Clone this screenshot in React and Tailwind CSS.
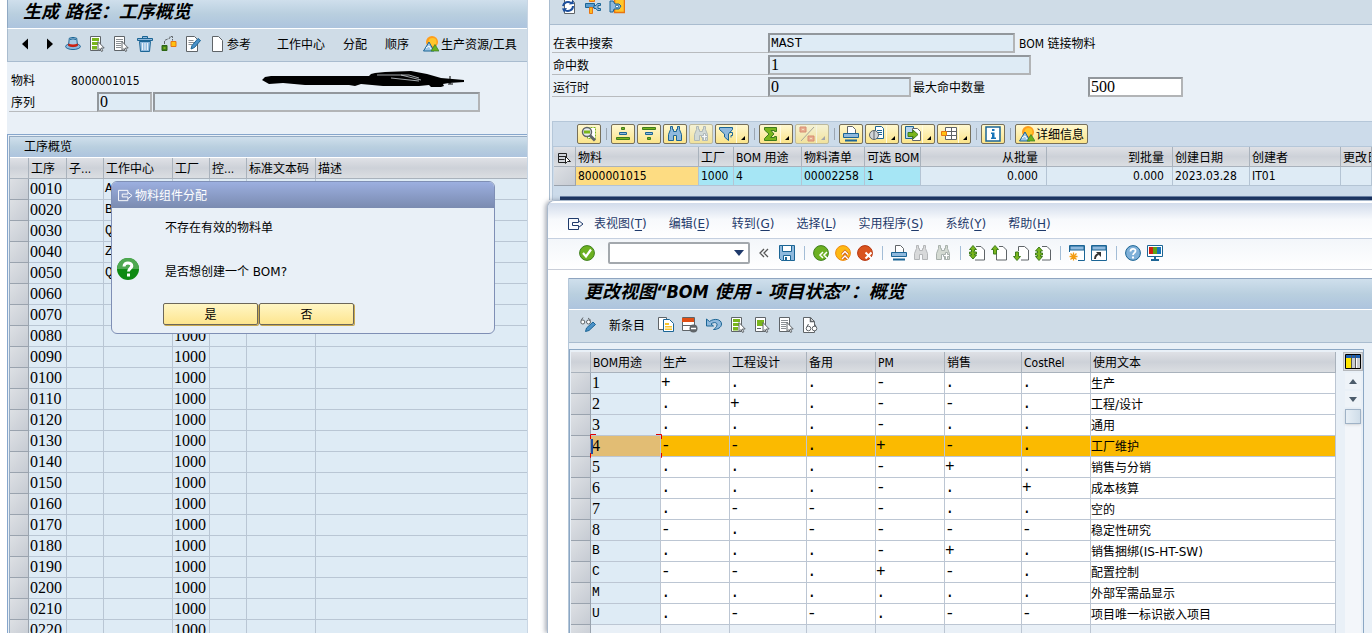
import React from 'react';

const OPERATIONS = [
  { no: '0010', center: 'A' },
  { no: '0020', center: 'B' },
  { no: '0030', center: 'Q' },
  { no: '0040', center: 'Z' },
  { no: '0050', center: 'Q' },
  { no: '0060' },
  { no: '0070' },
  { no: '0080', plant: '1000' },
  { no: '0090', plant: '1000' },
  { no: '0100', plant: '1000' },
  { no: '0110', plant: '1000' },
  { no: '0120', plant: '1000' },
  { no: '0130', plant: '1000' },
  { no: '0140', plant: '1000' },
  { no: '0150', plant: '1000' },
  { no: '0160', plant: '1000' },
  { no: '0170', plant: '1000' },
  { no: '0180', plant: '1000' },
  { no: '0190', plant: '1000' },
  { no: '0200', plant: '1000' },
  { no: '0210', plant: '1000' },
  { no: '0220', plant: '1000' },
];

// one character per column: 生产, 工程设计, 备用, PM, 销售, CostRel
const USAGES = [
  { id: '1', flags: '+..-..', text: '生产' },
  { id: '2', flags: '.+.--.', text: '工程/设计' },
  { id: '3', flags: '...-..', text: '通用' },
  { id: '4', flags: '--.+-.', text: '工厂维护', selected: true },
  { id: '5', flags: '...-+.', text: '销售与分销' },
  { id: '6', flags: '...-.+', text: '成本核算' },
  { id: '7', flags: '.---..', text: '空的' },
  { id: '8', flags: '-.----', text: '稳定性研究' },
  { id: 'B', flags: '...-+.', text: '销售捆绑(IS-HT-SW)' },
  { id: 'C', flags: '--.+-.', text: '配置控制' },
  { id: 'M', flags: '......', text: '外部军需品显示' },
  { id: 'U', flags: '.--.--', text: '项目唯一标识嵌入项目' },
];

const MENU = [
  ['表视图', 'T'],
  ['编辑', 'E'],
  ['转到', 'G'],
  ['选择', 'L'],
  ['实用程序', 'S'],
  ['系统', 'Y'],
  ['帮助', 'H'],
];

const BLUE = '#1b6595';
const SKY = '#8fb9dd';
const GREEN = '#7ab51d';
const DGREEN = '#3e7d1c';
const GRAY = '#5f6468';

function Svg({ children, className = 'h-4 w-4' }) {
  return (
    <svg viewBox="0 0 16 16" className={`${className} block shrink-0`} fill="none" aria-hidden="true">
      {children}
    </svg>
  );
}

const pointer = <path d="M9 5.5v9l2-2 1.5 3 1.3-.7-1.4-2.8h2.8z" fill="#fff" stroke={GRAY} />;
const sheet = <path d="M3.5.5h6l4 4v11h-10z" fill="#fff" stroke={GRAY} />;

const icons = {
  left: <path d="M11 2.500v11L5 8z" fill="#000" />,
  right: <path d="M6 2.500v11L12 8z" fill="#000" />,
  hat: (
    <>
      <ellipse cx="8" cy="10.5" rx="7.4" ry="3" fill={SKY} stroke={BLUE} />
      <path d="M3.500 9.500 4.300 2.200Q8 .6 11.700 2.200L12.500 9.500Q8 12 3.500 9.500z" fill="#a9cbe6" stroke={BLUE} />
      <path d="M3.300 7.500Q8 9.500 12.700 7.500v2.500Q8 12 3.300 10z" fill="#d0200f" />
      <path d="M5 3.500Q8 2.300 11 3.500" stroke={BLUE} />
    </>
  ),
  selectAll: (
    <>
      <path d="M1.500.5h10v14h-10z" fill="#fff" stroke={GRAY} />
      <path d="M3 2h7v3H3zM3 6h7v3H3zM3 10h5v3.500H3z" fill={GREEN} />
      {pointer}
    </>
  ),
  selectBlock: (
    <>
      <path d="M1.500.5h10v14h-10z" fill="#fff" stroke={GRAY} />
      <path d="M3 3h7v6H3z" fill={GREEN} />
      <path d="M3 11.500h4" stroke={GRAY} />
      {pointer}
    </>
  ),
  deselect: (
    <>
      <path d="M1.500.5h10v14h-10z" fill="#fff" stroke={GRAY} />
      <path d="M3 3.500h7M3 5.500h7M3 7.500h5M3 9.500h5M3 11.500h5" stroke="#8b9094" />
      {pointer}
    </>
  ),
  trash: (
    <>
      <path d="M5.500 2.500v-2h5v2M.5 2.500h15v2H.5z" fill={SKY} stroke={BLUE} />
      <path d="M2.500 5.500h11l-1 10h-9z" fill={SKY} stroke={BLUE} />
      <path d="M5.500 7v7M8 7v7M10.500 7v7" stroke="#e7f1f9" strokeWidth="1.200" />
    </>
  ),
  assign: (
    <>
      <path d="M3.500 8V4.500L9 2V.5h2.500v4" stroke={GRAY} strokeDasharray="3 1" />
      <path d="M1 9.500h5v5H1z" fill={DGREEN} stroke="#2c6513" />
      <path d="M2.500 11h2v2h-2z" fill={GREEN} />
      <path d="M10 5.500h5v5h-5z" fill="#ffc20e" stroke="#e87511" />
    </>
  ),
  edit: (
    <>
      <path d="M1.500.5h8l3 3v12h-11z" fill="#fff" stroke={GRAY} />
      <path d="M3.500 4.500h5M3.500 6.500h6M3.500 8.500h4" stroke="#8b9094" />
      <path d="m6 13 1-3.500 6-7 2.500 2-6 7z" fill="#4a91c8" stroke={BLUE} />
    </>
  ),
  page: sheet,
  mountain: (
    <>
      <circle cx="9" cy="6" r="6" fill="#ff9d1b" />
      <circle cx="9.500" cy="6" r="4" fill="#ffc62b" />
      <path d="M.5 15 6 6l5 9z" fill="#9cc5e5" stroke={BLUE} />
      <path d="m3 12 3-2 2 3" stroke="#fff" />
      <path d="m8 15 4-6.500 4 6.500z" fill="#6eb21b" stroke="#2f7a2a" strokeWidth=".7" />
    </>
  ),
  exit: <path d="M10.500 4.500v-2h-10v11h10v-2M4.500 6.500h6v-2L15 8l-4.500 3.500v-2h-6z" stroke="currentColor" />,
  refresh: (
    <>
      {sheet}
      <path d="M2 8a5 5 0 0 1 8-3M12 8a5 5 0 0 1-8 4" stroke="#1c4f9c" strokeWidth="2" />
      <path d="m8 6.500 5-.5-1-4zM6 10l-5 .5 2 4z" fill="#1c4f9c" />
    </>
  ),
  wrench: (
    <>
      <path d="M4.500.5h5v3h-5z" fill="#ffb81c" stroke="#e87511" />
      <path d="M.5 5.500h9v4h-9z" fill="#5a9dcf" stroke={BLUE} />
      <path d="M15.500 5.500h-3l-1.500 2h-2v3h2l1.500 2h3v-2H13V7.500h2.500z" fill={SKY} stroke={BLUE} />
      <path d="M4.500 9.500h3v6h-3z" fill="#ffb81c" stroke="#e87511" />
    </>
  ),
  wrenchPlan: (
    <>
      <path d="M5.500.5h10v14h-10z" fill="#ffc62b" stroke="#e87511" strokeWidth="1.500" />
      <path d="M1 14V3h3l2 3h4l2 2-2 3H5l-1 3z" fill="#8fb9dd" stroke={BLUE} />
      <circle cx="8" cy="8.500" r="1.500" fill="#fff" stroke={BLUE} />
    </>
  ),
  details: (
    <>
      <path d="M6.500 1.500h8v11h-8z" fill="#fff" stroke={GREEN} strokeDasharray="2 1" />
      <circle cx="6" cy="6" r="4.500" fill="#e8eef2" stroke={GRAY} strokeWidth="1.500" />
      <path d="M3 4.500h6v3H3z" fill={GREEN} />
      <path d="m9 9.500 5 5" stroke={GRAY} strokeWidth="3" />
    </>
  ),
  sortUp: (
    <>
      <path d="M6.500 1.500h3v2h-3z" fill={GREEN} stroke={DGREEN} />
      <path d="M4.500 6.500h7v2h-7z" fill={SKY} stroke={BLUE} />
      <path d="M1.500 11.500h13v2h-13z" fill={GREEN} stroke={DGREEN} />
    </>
  ),
  sortDown: (
    <>
      <path d="M1.500 1.500h13v2h-13z" fill={GREEN} stroke={DGREEN} />
      <path d="M4.500 6.500h7v2h-7z" fill={SKY} stroke={BLUE} />
      <path d="M6.500 11.500h3v2h-3z" fill={GREEN} stroke={DGREEN} />
    </>
  ),
  find: <path d="M3.500.5h2v3h1v2h3v-2h1v-3h2v3l2 5v6h-5v-5h-3v5h-5v-6l2-5z" fill={SKY} stroke={BLUE} />,
  findOff: <path d="M3.500.5h2v3h1v2h3v-2h1v-3h2v3l2 5v6h-5v-5h-3v5h-5v-6l2-5z" fill="#d8d9da" stroke="#b4b6b8" />,
  findNext: (
    <>
      <path d="M3.500.5h2v3h1v2h3v-2h1v-3h2v3l2 5v6h-5v-5h-3v5h-5v-6l2-5z" fill="#d4dad2" stroke="#a8b1ac" />
      <path d="M10.500 7.500h2v2h2v2h-2v3h-2v-3h-2v-2h2z" fill="#fff" stroke="#a8b1ac" />
    </>
  ),
  filter: (
    <>
      <path d="M.5 1.500h13v2L9.500 8v6.500L5.500 11V8l-5-4.500z" fill={SKY} stroke={BLUE} />
      <path d="M10.500 6.500h3v3h-1.500v2" stroke={BLUE} />
    </>
  ),
  sum: <path d="M1.500 1.500h12v4h-2v-1H8L11 8l-3.500 3.500h4v-1h2v4h-12v-2L6 8l-4.500-4z" fill={GREEN} stroke={DGREEN} />,
  subtotal: (
    <>
      <path d="M1 1h6v5H1zM9 10h6v5H9z" fill="#f0a27c" stroke="#d97b55" />
      <path d="M3 3.500h2M11 12.500h2" stroke="#fbe2b0" />
      <path d="M2 15 15 1" stroke="#9c9a88" />
    </>
  ),
  print: (
    <>
      <path d="M4.500 7V.5h5l3 3V7" fill="#fff" stroke={GRAY} />
      <path d="M.5 7.500h15v4H.5z" fill={SKY} stroke={BLUE} />
      <path d="M2 14.500h12" stroke={BLUE} strokeWidth="2" />
    </>
  ),
  view: (
    <>
      <path d="M6.500.5h6l2 2v10h-8z" fill="#fff" stroke={BLUE} />
      <path d="M8 4.500h5M8 6.500h5M8 8.500h5" stroke={BLUE} />
      <circle cx="5" cy="9" r="4.500" fill="#cfd4d8" stroke={GRAY} />
      <path d="M5 4.500v9" stroke={GRAY} />
    </>
  ),
  exportData: (
    <>
      <path d="M.5.5h8v12h-8z" fill="#b9d5ec" stroke={BLUE} />
      <path d="M7.500 2.500h5l3 3v9h-8z" fill="#fff" stroke={GRAY} />
      <path d="M3 6.500h5V4l5 4.500-5 4.500v-2.500H3z" fill={GREEN} stroke={DGREEN} />
    </>
  ),
  layout: (
    <>
      <path d="M4.500 1.500h11v12h-11zM4.500 5.500h11M4.500 9.500h11M10.500 1.500v12" fill="#fff" stroke={GRAY} />
      <path d="M.5 5.500h5v4h-5z" fill="#ffc20e" stroke="#e87511" />
    </>
  ),
  info: (
    <>
      <path d="M1 1h14v14H1z" fill="#fff" stroke={BLUE} strokeWidth="1.500" />
      <path d="M7 3h2.500v2H7zM6 6.500h3.500v5H11v1.500H6v-1.500h1V8H6z" fill="#1673b8" />
    </>
  ),
  check: (
    <>
      <circle cx="8" cy="8" r="7.400" fill="#6cb021" stroke="#3f7f1e" />
      <path d="m4 8 3 3.500L12 4.500" stroke="#fff" strokeWidth="2.200" />
    </>
  ),
  save: (
    <>
      <path d="M.5.5h15v15h-13l-2-2z" fill={SKY} stroke={BLUE} />
      <path d="M3.500.5h9v6h-9zM4.500 10.500h7v5h-7z" fill="#fff" stroke={BLUE} />
      <path d="M6 12h2v3H6z" fill={BLUE} />
    </>
  ),
  back: (
    <>
      <circle cx="8" cy="8" r="7.400" fill="#6cb021" stroke="#3f7f1e" />
      <path d="M10 7 7 10l3 3M14 7l-3 3 3 3" stroke="#fff" strokeWidth="1.500" />
    </>
  ),
  up: (
    <>
      <circle cx="8" cy="8" r="7.400" fill="#fdb913" stroke="#ee8a12" />
      <path d="m7 9.500 3-3 3 3M7 14l3-3 3 3" stroke="#d3631a" strokeWidth="3" />
      <path d="m7 9.500 3-3 3 3M7 14l3-3 3 3" stroke="#fff" strokeWidth="1.300" />
    </>
  ),
  cancel: (
    <>
      <circle cx="8" cy="8" r="7.400" fill="#d9541e" stroke="#b5350f" />
      <path d="m8.500 7.500 6 6M14.500 7.500l-6 6" stroke="#fff" strokeWidth="2" />
    </>
  ),
  firstPage: (
    <>
      <path d="M7 1.500h5l3.500 3.500v10H6" fill="#fff" stroke={GRAY} />
      <path d="m4 .5 3.500 4H5.500v1.500l-1 1H7.500v2H5.500v1h2L4 14 .5 10h2V9h-2V7h2V4.500h-2z" fill={GREEN} stroke={DGREEN} />
    </>
  ),
  prevPage: (
    <>
      <path d="M8 1.500h4l3.500 3.500v10H5.500V9" fill="#fff" stroke={GRAY} />
      <path d="m4 .5 3.500 4H5.500V9h-3V4.500h-2z" fill={GREEN} stroke={DGREEN} />
    </>
  ),
  nextPage: (
    <>
      <path d="M5.500 6V1.500h6L15.500 5v10H8" fill="#fff" stroke={GRAY} />
      <path d="m4 15.500 3.500-4H5.500V7h-3v4.500h-2z" fill={GREEN} stroke={DGREEN} />
    </>
  ),
  lastPage: (
    <>
      <path d="M7 1.500h5l3.500 3.500v10H7" fill="#fff" stroke={GRAY} />
      <path d="m4 15.500 3.500-4H5.500V10h2V8h-2V6h2L4 2 .5 6h2v2h-2v2h2v1.500h-2z" fill={GREEN} stroke={DGREEN} />
    </>
  ),
  newSession: (
    <>
      <path d="M.5.5h15v15H.5z" fill="#fff" stroke={BLUE} />
      <path d="M1 1h14v4H1z" fill={SKY} stroke={BLUE} />
      <path d="M0 7h9v9H0z" fill="#fff" />
      <path d="M4.500 7.500v8M.5 11.500h8M1.500 8.500l6 6M7.500 8.500l-6 6" stroke="#f39c12" strokeWidth="1.300" />
    </>
  ),
  shortcut: (
    <>
      <path d="M.5.5h15v15H.5z" fill="#fff" stroke={BLUE} />
      <path d="M1 1h14v4H1z" fill={SKY} stroke={BLUE} />
      <path d="M4 14q0-4 3.500-5" stroke="#333" strokeWidth="2" />
      <path d="M5 7h5v5z" fill="#333" />
    </>
  ),
  help: (
    <>
      <circle cx="8" cy="8" r="7.400" fill="#7fb0d8" stroke={BLUE} />
      <path d="M5.500 6.500C5.500 3 10.800 3.200 10.500 6c0 1.700-2.500 2-2.500 4" stroke="#fff" strokeWidth="1.800" />
      <path d="M7 11.500h2v2H7z" fill="#fff" />
    </>
  ),
  monitor: (
    <>
      <path d="M.5.5h15v11H.5z" fill="#fff" stroke={BLUE} />
      <path d="M2 2h4v7H2z" fill="#d0200f" />
      <path d="M6 2h4v7H6z" fill="#5fa315" />
      <path d="M10 2h4v7h-4z" fill="#1673b8" />
      <path d="M8 11.500v3M4 15h8" stroke={BLUE} strokeWidth="2" />
    </>
  ),
  glassesEdit: (
    <>
      <path d="M1 3.500 3 .5M8 1l3 2.500" stroke={GRAY} />
      <circle cx="2.800" cy="5" r="2" fill="#fff" stroke={GRAY} />
      <circle cx="8.500" cy="5" r="2" fill="#fff" stroke={GRAY} />
      <path d="m5.500 14.500 1-3.500 6.500-6 2.500 2.500-6.500 6z" fill="#4a91c8" stroke={BLUE} />
    </>
  ),
  copy: (
    <>
      <path d="M.5.5h8v12h-8z" fill="#fff" stroke={GRAY} />
      <path d="M5.500 2.500h6l4 4v8h-10z" fill="#fff" stroke={BLUE} />
      <path d="M7 6h4v2H7zM7 9h7v1.500H7zM7 11.500h7V13H7z" fill="#f8c52c" />
    </>
  ),
  deleteRow: (
    <>
      <path d="M.5.500h12v13H.5z" fill="#fff" stroke={GRAY} />
      <path d="M0 1h12v4H0z" fill="#e04e14" />
      <path d="M1 8.500h10" stroke={GRAY} />
      <circle cx="11.500" cy="11.500" r="4" fill={GRAY} />
      <path d="M9 11.500h5" stroke="#fff" strokeWidth="1.500" />
    </>
  ),
  undo: (
    <path d="M.5 2v7h7L5 7c3-2.500 6.500-1.500 6 1-.3 2-2 3.500-3.500 4.500 4 0 8-2 8-5.500C15.500 2 8 1 3.500 4.500z" fill={SKY} stroke={BLUE} />
  ),
  display: (
    <>
      <path d="M1.500.5h7l4 4v11h-11z" fill="#fff" stroke={GRAY} />
      <path d="M8.500.5v4h4" stroke={GRAY} strokeWidth="1.500" />
      <circle cx="6.500" cy="11.500" r="2.300" fill="#fff" stroke={GRAY} />
      <circle cx="12.500" cy="11.500" r="2.300" fill="#fff" stroke={GRAY} />
      <path d="M5 9.500 6.500 7M14 9.500 12.500 7" stroke={GRAY} />
    </>
  ),
  selectCols: (
    <>
      <path d="M2.500 3.500h8v9h-8zM2.500 6.500h8M2.500 9.500h6" stroke="#222" />
      <path d="M9.500 6.500v7l2-2h3z" fill="#fff" stroke="#222" />
    </>
  ),
};

function Icon({ name, className }) {
  return <Svg className={className}>{icons[name]}</Svg>;
}

function IconButton({ name, label, children }) {
  return (
    <button type="button" aria-label={label} className="flex shrink-0 items-center gap-[2px] whitespace-nowrap">
      <Icon name={name} />
      {children && <span className="pt-[2px]">{children}</span>}
    </button>
  );
}

function AlvButton({ name, label, split, disabled, children }) {
  return (
    <button
      type="button"
      aria-label={label}
      disabled={disabled}
      className={`flex h-5 min-w-6 shrink-0 items-center justify-center gap-px rounded-[2px] border bg-linear-to-b from-[#fff8cf] to-[#fbe489] px-[3px] whitespace-nowrap ${
        disabled ? 'border-[#b9b18a] opacity-80' : 'border-[#77705a]'
      }`}
    >
      <Icon name={name} />
      {children && <span className="pt-[2px]">{children}</span>}
      {split && (
        <span className="flex h-full w-[9px] items-end justify-end border-l border-[#fffbe0] pb-[3px]">
          <svg viewBox="0 0 4 4" className="h-1 w-1" aria-hidden="true">
            <path d="M4 0v4H0z" fill={disabled ? '#999' : '#000'} />
          </svg>
        </span>
      )}
    </button>
  );
}

function AlvSep() {
  return (
    <span className="flex w-[6px] shrink-0 items-center justify-center">
      <span className="h-3 w-px bg-[#9aa5b1]" />
    </span>
  );
}

function Sep() {
  return (
    <span className="flex w-[6px] shrink-0 justify-center">
      <span className="h-[14px] w-px bg-[#a3bdd6]" />
    </span>
  );
}

const FIELD =
  'block h-5 min-w-0 border-2 border-t-[#92979c] border-l-[#92979c] border-r-[#b2b4b6] border-b-[#b2b4b6] px-px leading-4 outline-none';
const NUM = "font-['Liberation_Serif','Noto_Sans_CJK_SC',serif] text-base";
const MONO = "font-['Liberation_Mono','Noto_Sans_CJK_SC',monospace] text-[13px]";
const WIDE = "font-['DejaVu_Sans','Noto_Sans_CJK_SC',sans-serif]";
const TITLE = 'text-lg leading-6 font-bold italic whitespace-nowrap';
const TITLE_BG = 'bg-linear-to-b from-[#cfdfec] via-[#b9cfdf] to-[#adc4de]';
const HEAD_BG = 'bg-linear-to-b from-[#dfe1e6] via-[#cdd1d8] to-[#dbdee2]';
const SEL = 'border-r border-b border-[#9aa3ae] bg-linear-to-br from-[#dde0e4] to-[#c6cbd3] p-0';

function RoutingWindow() {
  const th = `h-[21px] border-r border-b border-[#a9b2bc] ${HEAD_BG} truncate px-[2px] pt-[2px] text-left font-normal last:border-r-0`;
  const td = 'h-[21px] overflow-hidden border-r border-b border-[#b9c6d4] bg-[#deebf5] p-0 pl-px leading-5 last:border-r-0';
  return (
    <section className="relative flex min-h-0 min-w-0 flex-col overflow-hidden border-r border-[#c9d6e4] bg-[#e9f0f7]">
      <header className={`flex h-[29px] shrink-0 items-start border-b border-l border-b-white border-l-[#8fa9c4] pl-[15px] ${TITLE_BG}`}>
        <h1 className={TITLE}>生成 路径：工序概览</h1>
      </header>
      <div className="flex h-[33px] shrink-0 items-center gap-2 border-b border-l border-b-[#a9bccf] border-l-[#a9bccf] bg-[#cfdce7] pb-[3px] pl-[9px]">
        <IconButton name="left" label="上一个" />
        <IconButton name="right" label="下一个" />
        <IconButton name="hat" label="抬头" />
        <IconButton name="selectAll" label="全选" />
        <IconButton name="deselect" label="取消全选" />
        <IconButton name="trash" label="删除" />
        <IconButton name="assign" label="组件分配" />
        <IconButton name="edit" label="长文本" />
        <IconButton name="page">参考</IconButton>
        <div className="mr-[6px] ml-[18px] flex gap-[18px] pt-[2px] whitespace-nowrap">
          <button type="button">工作中心</button>
          <button type="button">分配</button>
          <button type="button">顺序</button>
        </div>
        <IconButton name="mountain">生产资源/工具</IconButton>
      </div>

      <div className="flex shrink-0 flex-col gap-[2px] pt-2 pb-[22px] pl-[2px]">
        <div className="flex h-5 items-center pl-[2px]">
          <span className="w-[60px] shrink-0 pt-[2px]">物料</span>
          <span className="w-[190px] shrink-0 pt-[2px]">8000001015</span>
          <svg viewBox="0 0 205 18" className="h-[18px] w-[205px] shrink-0" fill="none" aria-hidden="true">
            <path
              d="M1 9 4 6 10 5h20L108 5 110 3 114 2 124 1 150 0 166 3 180 7 203 9 203 11 188 12 182 13 183 15 180 16 170 16 168 14 158 15 122 15 100 13 94 15 88 14 44 14 22 12 8 13z"
              fill="#000"
            />
            <path d="M116 4h32l10 3M130 7l28 3M140 4l20 5" stroke="#e9f0f7" strokeWidth=".7" />
            <path d="M189 5v8M187 13h5" stroke="#000" />
          </svg>
        </div>
        <div className="flex h-5 pr-[47px]">
          <label htmlFor="seq" className="w-[88px] shrink-0 border-b border-[#b8bbbe] pl-[2px] leading-[22px]">
            序列
          </label>
          <input id="seq" readOnly defaultValue="0" className={`${FIELD} ${NUM} mr-px w-[55px] bg-[#deebf5]`} />
          <input aria-label="序列描述" readOnly className={`${FIELD} flex-1 bg-[#deebf5]`} />
        </div>
      </div>

      <div className="min-h-0 flex-1 border-t border-l border-[#86a6cc] pt-px pl-px">
        <div className="border-t border-l border-[#94abc3]">
          <h2 className={`h-[21px] border-b border-white pl-[14px] leading-5 ${TITLE_BG}`}>工序概览</h2>
          <table className="w-full table-fixed border-separate border-spacing-0">
            <colgroup>
              <col className="w-[19px]" />
              <col className="w-[38px]" />
              <col className="w-[37px]" />
              <col className="w-[69px]" />
              <col className="w-[37px]" />
              <col className="w-[37px]" />
              <col className="w-[69px]" />
              <col />
            </colgroup>
            <thead>
              <tr>
                <th className={th} />
                <th className={th}>工序</th>
                <th className={th}>子...</th>
                <th className={th}>工作中心</th>
                <th className={th}>工厂</th>
                <th className={th}>控...</th>
                <th className={th}>标准文本码</th>
                <th className={th}>描述</th>
              </tr>
            </thead>
            <tbody>
              {OPERATIONS.map((op) => (
                <tr key={op.no}>
                  <td className={SEL} />
                  <td className={`${td} ${NUM}`}>{op.no}</td>
                  <td className={td} />
                  <td className={`${td} ${MONO}`}>{op.center}</td>
                  <td className={`${td} ${NUM}`}>{op.plant}</td>
                  <td className={td} />
                  <td className={td} />
                  <td className={td} />
                </tr>
              ))}
            </tbody>
          </table>
        </div>
      </div>

      <ComponentDialog />
    </section>
  );
}

function ComponentDialog() {
  const button =
    'h-[22px] w-[95px] rounded-[2px] border border-[#6c675a] bg-linear-to-b from-[#fff6c4] to-[#fde58e] pt-[2px] shadow-[1px_1px_0_#c9a94f]';
  return (
    <div
      role="dialog"
      aria-labelledby="dlg-title"
      className="absolute top-[181px] left-[104px] w-[384px] overflow-hidden rounded-md border border-[#7f8fb5] bg-[#e9f0f7]"
    >
      <div className="flex h-[26px] items-center gap-[2px] bg-linear-to-b from-[#9cafe0] to-[#7a8bb0] pl-[6px] text-white">
        <Icon name="exit" className="h-[15px] w-[15px]" />
        <h2 id="dlg-title" className="pt-[2px]">
          物料组件分配
        </h2>
      </div>
      <div className="flex h-[95px] items-start">
        <svg viewBox="0 0 22 22" className="mt-[50px] ml-[5px] h-[22px] w-[22px]" fill="none" aria-hidden="true">
          <circle cx="11" cy="11" r="11" fill="#0e8a12" />
          <path d="M0 11a11 11 0 0 1 22 0z" fill="#4fa851" />
          <path d="M7 8.500C7 3.500 15 4 14.800 8 14.600 10.300 11.500 10.500 11.500 13.500" stroke="#fff" strokeWidth="3" />
          <path d="M10 15.500h3v3h-3z" fill="#fff" />
        </svg>
        <div className={`mt-[10px] ml-[26px] flex flex-col gap-6 ${WIDE}`}>
          <p className="leading-5">不存在有效的物料单</p>
          <p className="leading-5">是否想创建一个 BOM?</p>
        </div>
      </div>
      <div className="flex gap-px pb-2 pl-[51px]">
        <button type="button" className={button}>
          是
        </button>
        <button type="button" className={button}>
          否
        </button>
      </div>
    </div>
  );
}

function DataBrowser() {
  const label = 'w-[216px] shrink-0 border-b border-[#b8bbbe] pl-px leading-[22px]';
  const th = `h-5 border-r border-b border-[#a9b2bc] ${HEAD_BG} truncate px-[2px] pt-[2px] font-normal`;
  const td = 'h-[19px] truncate border-r border-b border-[#b4c4d4] px-[2px] leading-[18px]';
  return (
    <section className="ml-[2px] shrink-0 border-l border-[#a9bccf] bg-[#e9f0f7]">
      <div className="flex h-[25px] items-start gap-2 border-b border-[#a9bccf] bg-[#cfdce7] pl-[11px]">
        <div className="-mt-[2px] flex gap-2">
          <IconButton name="refresh" label="刷新" />
          <IconButton name="wrench" label="设置" />
          <IconButton name="wrenchPlan" label="检查" />
        </div>
      </div>
      <div className="flex flex-col gap-[2px] pt-2 pb-6 pl-[2px]">
        <div className="flex h-5">
          <label htmlFor="tab" className={label}>
            在表中搜索
          </label>
          <input id="tab" readOnly defaultValue="MAST" className={`${FIELD} ${MONO} w-[247px] bg-[#deebf5]`} />
          <span className="pl-1 leading-[22px]">BOM 链接物料</span>
        </div>
        <div className="flex h-5">
          <label htmlFor="hits" className={label}>
            命中数
          </label>
          <input id="hits" readOnly defaultValue="1" className={`${FIELD} ${NUM} w-[263px] bg-[#deebf5]`} />
        </div>
        <div className="flex h-5">
          <label htmlFor="runtime" className={label}>
            运行时
          </label>
          <input id="runtime" readOnly defaultValue="0" className={`${FIELD} ${NUM} w-[143px] bg-[#deebf5]`} />
          <label htmlFor="maxhits" className="w-[177px] shrink-0 pl-[2px] leading-[22px]">
            最大命中数量
          </label>
          <input id="maxhits" defaultValue="500" className={`${FIELD} ${NUM} w-[95px] bg-white`} />
        </div>
      </div>

      <div className="ml-[2px] border-t border-l border-[#b5c7d9] bg-[#ccdbea]">
        <div className="flex h-[25px] gap-[2px] border-b border-[#b5c7d9] pt-[2px] pb-[2px] pl-6">
          <AlvButton name="details" label="明细" />
          <AlvSep />
          <AlvButton name="sortUp" label="升序" />
          <AlvButton name="sortDown" label="降序" />
          <AlvButton name="find" label="查找" />
          <AlvButton name="findNext" label="查找下一个" disabled />
          <AlvButton name="filter" label="过滤器" split />
          <AlvSep />
          <AlvButton name="sum" label="总计" split />
          <AlvButton name="subtotal" label="小计" split disabled />
          <AlvSep />
          <AlvButton name="print" label="打印" />
          <AlvButton name="view" label="视图" split />
          <AlvButton name="exportData" label="导出" split />
          <AlvButton name="layout" label="布局" split />
          <AlvSep />
          <AlvButton name="info" label="信息" />
          <AlvSep />
          <AlvButton name="mountain">详细信息</AlvButton>
        </div>
        <div className="pl-px">
          <table className="w-full table-fixed border-separate border-spacing-0 text-left">
            <colgroup>
              <col className="w-[22px]" />
              <col className="w-[123px]" />
              <col className="w-[35px]" />
              <col className="w-[68px]" />
              <col className="w-[63px]" />
              <col className="w-[56px]" />
              <col className="w-[126px]" />
              <col className="w-[126px]" />
              <col className="w-[77px]" />
              <col className="w-[91px]" />
              <col />
            </colgroup>
            <thead>
              <tr>
                <th className={`${th} text-clip`}>
                  <Icon name="selectCols" />
                </th>
                <th className={th}>物料</th>
                <th className={th}>工厂</th>
                <th className={th}>BOM 用途</th>
                <th className={th}>物料清单</th>
                <th className={`${th} text-clip`}>可选 BOM</th>
                <th className={`${th} pr-2 text-right`}>从批量</th>
                <th className={`${th} pr-2 text-right`}>到批量</th>
                <th className={th}>创建日期</th>
                <th className={th}>创建者</th>
                <th className={`${th} text-clip`}>更改日期</th>
              </tr>
            </thead>
            <tbody>
              <tr>
                <td className={SEL} />
                <td className={`${td} bg-[#fddc82]`}>8000001015</td>
                <td className={`${td} bg-[#a6e6f5] text-clip`}>1000</td>
                <td className={`${td} bg-[#a6e6f5]`}>4</td>
                <td className={`${td} bg-[#a6e6f5] text-clip`}>00002258</td>
                <td className={`${td} bg-[#a6e6f5]`}>1</td>
                <td className={`${td} bg-[#deebf5] pr-2 text-right`}>0.000</td>
                <td className={`${td} bg-[#deebf5] pr-2 text-right`}>0.000</td>
                <td className={`${td} bg-[#deebf5]`}>2023.03.28</td>
                <td className={`${td} bg-[#deebf5]`}>IT01</td>
                <td className={`${td} bg-[#deebf5]`} />
              </tr>
            </tbody>
          </table>
        </div>
        <div className="mt-[10px] ml-[7px] h-1 border-t border-[#6b82a5] bg-[#16305f]" />
      </div>
    </section>
  );
}

function Flag({ value }) {
  return <span className="block font-['Liberation_Mono',monospace] text-base leading-5">{value}</span>;
}

function SelectionMarks() {
  return (
    <svg viewBox="0 0 72 24" className="absolute -top-[2px] -left-px h-6 w-[72px]" fill="none" aria-hidden="true">
      <path d="M6 .5H.5V5M66 .5h5.500V5M6 23.500H.5V19M66 23.500h5.500V19" stroke="#e00000" />
    </svg>
  );
}

function UsageView() {
  const th = `h-[21px] border-r border-b border-[#a9b2bc] ${HEAD_BG} truncate px-[2px] pt-[2px] font-normal`;
  const line = 'h-[21px] border-r border-b border-[#bcc6d3] p-0 leading-5';
  return (
    <section className="z-10 flex min-h-0 flex-1 flex-col overflow-hidden rounded-tl-lg border-t border-l border-[#a9b9cc] bg-white shadow-[-2px_0_4px_rgba(90,100,120,0.5)]">
      <nav
        className={`flex h-[38px] shrink-0 items-center gap-[22px] border-b border-[#c5d0e0] bg-linear-to-b from-[#cdd8e9] via-[#f7f9fc] to-white pt-2 pl-5 text-[#1f3a6b] shadow-[inset_0_2px_0_#fff] ${WIDE}`}
      >
        <span className="-mr-3">
          <Icon name="exit" className="h-4 w-4" />
        </span>
        {MENU.map(([name, key]) => (
          <a key={key} href="#" className="pt-px whitespace-nowrap">
            {name}(<u className="underline-offset-2">{key}</u>)
          </a>
        ))}
      </nav>
      <div className="flex h-[31px] shrink-0 items-center gap-[6px] border-b border-[#c9ced8] bg-linear-to-b from-[#f3f6fa] to-white pb-[2px] pl-[31px]">
        <IconButton name="check" label="回车" />
        <div className="relative mx-[7px] w-[142px] shrink-0">
          <select aria-label="命令" className="h-[22px] w-full appearance-none rounded-[2px] border-2 border-[#a3a8ad] bg-white">
            <option></option>
          </select>
          <svg viewBox="0 0 10 6" className="pointer-events-none absolute top-2 right-[6px] h-[6px] w-[10px]" aria-hidden="true">
            <path d="M0 0h10L5 6z" fill="#1f3a6b" />
          </svg>
        </div>
        <button type="button" aria-label="收起" className="mr-1 -ml-1">
          <svg viewBox="0 0 10 10" className="h-[10px] w-[10px]" fill="none" aria-hidden="true">
            <path d="M5 1 1 5l4 4M9 1 5 5l4 4" stroke="#555" strokeWidth="1.300" />
          </svg>
        </button>
        <IconButton name="save" label="保存" />
        <Sep />
        <IconButton name="back" label="返回" />
        <IconButton name="up" label="退出" />
        <IconButton name="cancel" label="取消" />
        <Sep />
        <IconButton name="print" label="打印" />
        <IconButton name="findOff" label="查找" />
        <IconButton name="findNext" label="查找下一个" />
        <Sep />
        <IconButton name="firstPage" label="首页" />
        <IconButton name="prevPage" label="上一页" />
        <IconButton name="nextPage" label="下一页" />
        <IconButton name="lastPage" label="末页" />
        <Sep />
        <IconButton name="newSession" label="新建会话" />
        <IconButton name="shortcut" label="快捷方式" />
        <Sep />
        <IconButton name="help" label="帮助" />
        <IconButton name="monitor" label="本地布局" />
      </div>

      <div className="mt-2 ml-5 flex min-h-0 flex-1 flex-col border-l border-[#b5c7d9] bg-[#e9f0f7]">
        <header className={`flex h-8 shrink-0 items-start border-t border-b border-t-[#8fa5c0] border-b-white pt-px pl-[15px] ${TITLE_BG}`}>
          <h1 className={TITLE}>更改视图“BOM 使用 - 项目状态”：概览</h1>
        </header>
        <div className="flex h-[33px] shrink-0 items-center gap-2 border-b border-[#a9bccf] bg-[#cfdce7] pb-[2px] pl-[11px]">
          <IconButton name="glassesEdit" label="显示/更改" />
          <button type="button" className="mx-[5px] pt-[2px] whitespace-nowrap">
            新条目
          </button>
          <IconButton name="copy" label="复制为" />
          <IconButton name="deleteRow" label="删除" />
          <IconButton name="undo" label="撤消" />
          <IconButton name="selectAll" label="全选" />
          <IconButton name="selectBlock" label="选择块" />
          <IconButton name="deselect" label="取消全选" />
          <IconButton name="display" label="显示" />
        </div>

        <div className="mt-[6px] mr-2 flex min-h-0 flex-1 items-stretch overflow-hidden border-x border-t border-[#8ba7c4] pt-[2px] pl-px">
          <div className="min-w-0 flex-1">
            <table className="w-full table-fixed border-separate border-spacing-0 text-left">
              <colgroup>
                <col className="w-5" />
                <col className="w-[70px]" />
                <col className="w-[69px]" />
                <col className="w-[77px]" />
                <col className="w-[69px]" />
                <col className="w-[69px]" />
                <col className="w-[77px]" />
                <col className="w-[69px]" />
                <col />
              </colgroup>
              <thead>
                <tr>
                  <th className={th} />
                  <th className={th}>BOM用途</th>
                  <th className={th}>生产</th>
                  <th className={th}>工程设计</th>
                  <th className={th}>备用</th>
                  <th className={th}>PM</th>
                  <th className={th}>销售</th>
                  <th className={th}>CostRel</th>
                  <th className={th}>使用文本</th>
                </tr>
              </thead>
              <tbody>
                {USAGES.map((row) => {
                  const bg = row.selected ? 'bg-[#fbba00]' : 'bg-white';
                  return (
                    <tr key={row.id}>
                      <td className={SEL} />
                      <td
                        className={`${line} relative pl-px ${row.id > '9' ? MONO : NUM} ${
                          row.selected ? 'bg-[#e2bd74]' : 'bg-[#deebf5]'
                        }`}
                      >
                        {row.selected && <span className="absolute top-[3px] left-0 h-[15px] w-[2px] bg-[#1f4fa0]" />}
                        {row.id}
                        {row.selected && <SelectionMarks />}
                      </td>
                      {row.flags.split('').map((flag, i) => (
                        <td key={i} className={`${line} ${bg}`}>
                          <Flag value={flag} />
                        </td>
                      ))}
                      <td className={`${line} ${bg} ${WIDE}`}>
                        <span className="block pt-[2px] leading-[18px]">{row.text}</span>
                      </td>
                    </tr>
                  );
                })}
                <tr>
                  <td className={SEL} />
                  {Array.from({ length: 8 }, (_, i) => (
                    <td key={i} className={line} />
                  ))}
                </tr>
              </tbody>
            </table>
          </div>
          <div className="ml-[7px] flex w-[20px] shrink-0 flex-col items-center">
            <button type="button" aria-label="表设置" className="border border-[#b5b8bc] bg-[#d9dce0] p-px">
              <svg viewBox="0 0 16 15" className="h-[15px] w-4" aria-hidden="true">
                <path d="M.5.5h15v14H.5z" fill="#fff" stroke="#000" />
                <path d="M1 1h14v3H1z" fill="#1c5fb0" />
                <path d="M1 4h5v10H1z" fill="#ffe600" />
                <path d="M7 4h3v10H7zM12 4h3v10h-3z" fill="#c9ccd0" />
                <path d="M6.500 1v13M10.500 1v13" stroke="#555" />
              </svg>
            </button>
            <button type="button" aria-label="向上" className="mt-[2px] flex h-4 w-4 items-center justify-center bg-[#eef3f8]">
              <svg viewBox="0 0 8 5" className="h-[5px] w-2" aria-hidden="true">
                <path d="M0 5h8L4 0z" fill="#4c5c6b" />
              </svg>
            </button>
            <button type="button" aria-label="向下" className="mt-[2px] flex h-4 w-4 items-center justify-center bg-[#eef3f8]">
              <svg viewBox="0 0 8 5" className="h-[5px] w-2" aria-hidden="true">
                <path d="M0 0h8L4 5z" fill="#4c5c6b" />
              </svg>
            </button>
            <div className="mt-[2px] w-4 flex-1 bg-[#f3f6fa]">
              <div className="h-[15px] border border-[#9fb2c6] bg-linear-to-r from-[#e7eff6] to-[#cfdde9] shadow-sm" />
            </div>
          </div>
        </div>
      </div>
    </section>
  );
}

export default function App() {
  return (
    <main className="grid h-screen grid-cols-[521fr_825fr] grid-rows-[minmax(0,1fr)] gap-[19px] overflow-hidden bg-white pl-[7px] font-['DejaVu_Sans_Condensed','Noto_Sans_CJK_SC',sans-serif] text-xs text-black">
      <RoutingWindow />
      <div className="flex min-h-0 min-w-0 flex-col">
        <DataBrowser />
        <UsageView />
      </div>
    </main>
  );
}
